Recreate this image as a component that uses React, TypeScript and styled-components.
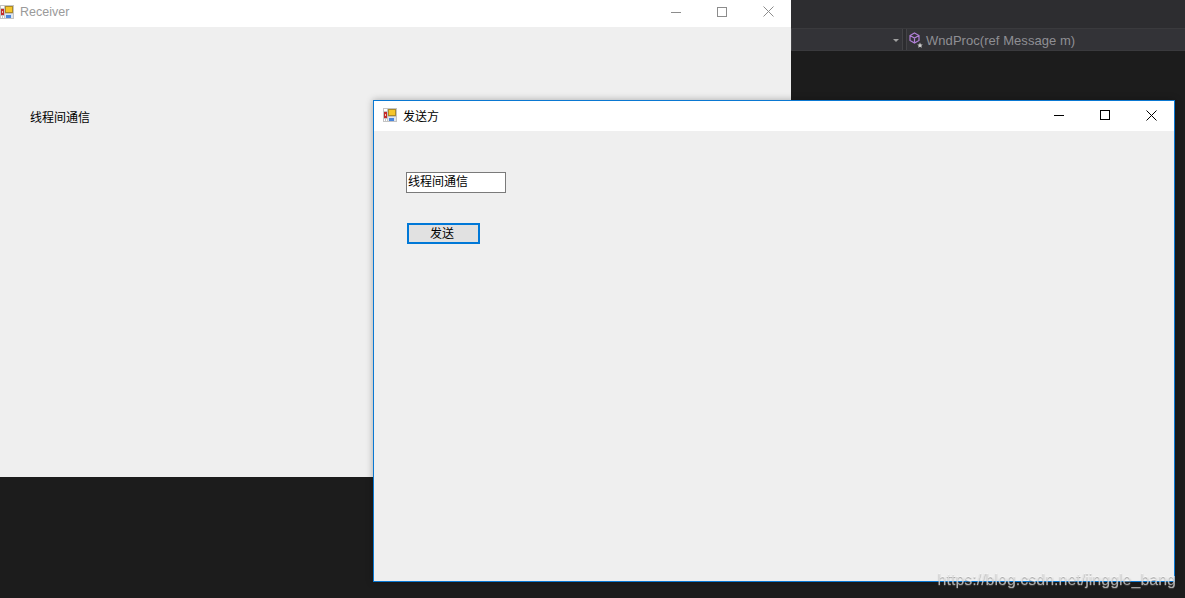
import React from 'react';
import styled, { createGlobalStyle } from 'styled-components';

const GlobalStyle = createGlobalStyle`
  html, body {
    margin: 0;
    padding: 0;
    width: 100%;
    height: 100%;
    overflow: hidden;
    background: #1e1e1e;
  }
`;

const Desktop = styled.div`
  position: relative;
  width: 1185px;
  height: 598px;
  overflow: hidden;
  background: #1c1c1c;
  font-family: "Liberation Sans", "Noto Sans CJK SC", sans-serif;
`;

const IdeTopBand = styled.div`
  height: 28px;
  background: #2d2d30;
  border-bottom: 1px solid #3a3a3d;
`;

const IdeNavBar = styled.div`
  height: 21px;
  padding-left: 791px;
  display: flex;
  gap: 3px;
  background: #2d2d30;
  border-bottom: 1px solid #3a3a3d;
`;

const NavDropdown = styled.div<{ $width: number }>`
  width: ${(p) => p.$width}px;
  flex: none;
  box-sizing: border-box;
  display: flex;
  align-items: center;
  justify-content: flex-end;
  padding: 0 1px 0 3px;
  background: #333337;
  border-right: 1px solid #434346;
  border-left: 1px solid #434346;
  color: #8f8f94;
  font-size: 13px;
  white-space: nowrap;
`;

const MethodDropdown = styled(NavDropdown)`
  justify-content: flex-start;
  gap: 2px;
  border-right: none;
  padding: 2px 0 0 2px;
  letter-spacing: 0.05px;
`;

const Caret = styled.span`
  width: 0;
  height: 0;
  margin-right: 2px;
  margin-top: 2px;
  border-left: 3px solid transparent;
  border-right: 3px solid transparent;
  border-top: 3px solid #a0a0a0;
`;

const Window = styled.div<{ $left: number; $top: number; $width: number; $height: number; $active?: boolean }>`
  position: absolute;
  left: ${(p) => p.$left}px;
  top: ${(p) => p.$top}px;
  width: ${(p) => p.$width}px;
  height: ${(p) => p.$height}px;
  box-sizing: border-box;
  display: flex;
  flex-direction: column;
  background: #efefef;
  border: ${(p) => (p.$active ? '1px solid #0a78d2' : 'none')};
  box-shadow: ${(p) => (p.$active ? '0 0 7px rgba(0, 0, 0, 0.3)' : 'none')};
`;

const TitleBar = styled.div<{ $active?: boolean }>`
  height: ${(p) => (p.$active ? 30 : 27)}px;
  flex: none;
  box-sizing: border-box;
  display: flex;
  align-items: center;
  background: #ffffff;
  padding: ${(p) => (p.$active ? '0 0 2px 9px' : '0 0 4px 0')};
  gap: 6px;
`;

const TitleText = styled.span<{ $active?: boolean }>`
  flex: 1;
  font-size: ${(p) => (p.$active ? 12 : 12.5)}px;
  color: ${(p) => (p.$active ? '#000000' : '#9a9a9a')};
`;

const Controls = styled.div<{ $active?: boolean }>`
  display: flex;
  align-items: center;
  height: 100%;
  color: ${(p) => (p.$active ? '#000000' : '#8c8c8c')};
`;

const ControlButton = styled.div`
  width: 46px;
  height: 100%;
  display: flex;
  align-items: center;
  justify-content: center;
`;

const ReceiverBody = styled.div`
  flex: 1;
  padding: 83px 0 0 30px;
  font-size: 12px;
  line-height: 16px;
  color: #000000;
`;

const SenderBody = styled.div`
  flex: 1;
  display: flex;
  flex-direction: column;
  align-items: flex-start;
  padding: 41px 0 0 32px;
`;

const TextInput = styled.div`
  width: 100px;
  height: 21px;
  box-sizing: border-box;
  border: 1px solid #7a7a7a;
  background: #ffffff;
  padding-left: 1px;
  font-size: 12px;
  line-height: 18px;
  color: #000000;
`;

const SendButton = styled.div`
  width: 73px;
  height: 21px;
  margin: 30px 0 0 1px;
  box-sizing: border-box;
  border: 2px solid #0078d7;
  background: #e1e1e1;
  padding-right: 3px;
  text-align: center;
  font-size: 12px;
  line-height: 18px;
  color: #000000;
`;

const Watermark = styled.div`
  position: absolute;
  right: 9px;
  bottom: 9px;
  font-size: 16px;
  line-height: 18px;
  color: rgba(255, 255, 255, 0.62);
  text-shadow: 0 1px 1px rgba(90, 90, 90, 0.6);
  filter: blur(0.5px);
`;

// the default WinForms window icon
const FormIcon: React.FC = () => (
  <svg width="14" height="14" viewBox="0 0 14 14" style={{ flex: 'none' }}>
    <rect x="0" y="0" width="14" height="14" fill="#c4c4c4" />
    <rect x="1" y="1" width="3" height="2" fill="#ffffff" />
    <rect x="1" y="4" width="3" height="6" fill="#c42b2b" />
    <rect x="2" y="6" width="1" height="2" fill="#f3c9b8" />
    <rect x="1" y="11" width="1" height="2" fill="#ffffff" />
    <rect x="3" y="11" width="1" height="2" fill="#ffffff" />
    <rect x="5" y="1" width="8" height="7" fill="#a98a2a" />
    <rect x="6" y="2" width="6" height="5" fill="#f6c62c" />
    <rect x="5" y="9" width="8" height="4" fill="#dfe6ef" />
    <rect x="6" y="10" width="5" height="3" fill="#4a86dc" />
  </svg>
);

const MinimizeIcon: React.FC = () => (
  <svg width="10" height="10" viewBox="0 0 10 10">
    <path d="M0 5.5H10" stroke="currentColor" strokeWidth="1" />
  </svg>
);

const MaximizeIcon: React.FC = () => (
  <svg width="10" height="10" viewBox="0 0 10 10">
    <rect x="0.5" y="0.5" width="9" height="9" fill="none" stroke="currentColor" strokeWidth="1" />
  </svg>
);

const CloseIcon: React.FC = () => (
  <svg width="11" height="11" viewBox="0 0 11 11">
    <path d="M0.5 0.5L10.5 10.5M10.5 0.5L0.5 10.5" stroke="currentColor" strokeWidth="1" />
  </svg>
);

const MethodIcon: React.FC = () => (
  <svg width="15" height="17" viewBox="0 0 15 17" style={{ flex: 'none' }}>
    <path d="M5.5 1L10 3.5V8.5L5.5 11L1 8.5V3.5Z M1 3.5L5.5 6L10 3.5 M5.5 6V11" fill="none" stroke="#b180d7" strokeWidth="1.2" />
    <path d="M11 10.5L11.8 12.4L13.8 12.5L12.3 13.8L12.8 15.8L11 14.7L9.2 15.8L9.7 13.8L8.2 12.5L10.2 12.4Z" fill="#d0d0d0" />
  </svg>
);

const WindowControls: React.FC<{ active?: boolean }> = ({ active }) => (
  <Controls $active={active}>
    <ControlButton><MinimizeIcon /></ControlButton>
    <ControlButton><MaximizeIcon /></ControlButton>
    <ControlButton><CloseIcon /></ControlButton>
  </Controls>
);

const App: React.FC = () => (
  <Desktop>
    <GlobalStyle />
    <IdeTopBand />
    <IdeNavBar>
      <NavDropdown $width={112}>
        <Caret />
      </NavDropdown>
      <MethodDropdown $width={279}>
        <MethodIcon />
        WndProc(ref Message m)
      </MethodDropdown>
    </IdeNavBar>

    <Window $left={0} $top={0} $width={791} $height={477}>
      <TitleBar>
        <FormIcon />
        <TitleText>Receiver</TitleText>
        <WindowControls />
      </TitleBar>
      <ReceiverBody>线程间通信</ReceiverBody>
    </Window>

    <Window $left={373} $top={100} $width={802} $height={482} $active>
      <TitleBar $active>
        <FormIcon />
        <TitleText $active>发送方</TitleText>
        <WindowControls active />
      </TitleBar>
      <SenderBody>
        <TextInput>线程间通信</TextInput>
        <SendButton>发送</SendButton>
      </SenderBody>
    </Window>

    <Watermark>https://blog.csdn.net/jinggle_bang</Watermark>
  </Desktop>
);

export default App;
